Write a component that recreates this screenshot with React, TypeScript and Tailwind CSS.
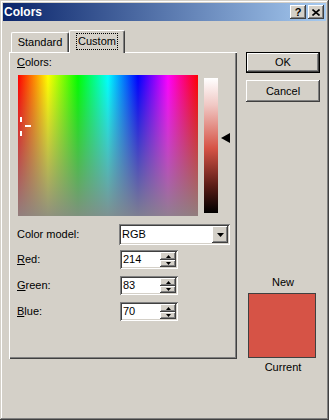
const raised =
  'bg-[#d4d0c8] shadow-[inset_-1px_-1px_#404040,inset_1px_1px_#ffffff,inset_-2px_-2px_#808080]';
const sunken =
  'bg-white shadow-[inset_1px_1px_#808080,inset_-1px_-1px_#ffffff,inset_2px_2px_#404040,inset_-2px_-2px_#d4d0c8]';

function Tri({ dir, size = 'sm' }: { dir: 'up' | 'down' | 'left'; size?: 'sm' | 'md' }) {
  if (dir === 'left') {
    return (
      <svg width="9" height="10" viewBox="0 0 9 10">
        <polygon points="0,5 9,0 9,10" fill="#000" />
      </svg>
    );
  }
  const w = size === 'md' ? 7 : 5;
  const h = size === 'md' ? 4 : 3;
  return (
    <svg width={w} height={h} viewBox={`0 0 ${w} ${h}`}>
      {dir === 'up' ? (
        <polygon points={`0,${h} ${w / 2},0 ${w},${h}`} fill="#000" />
      ) : (
        <polygon points={`0,0 ${w},0 ${w / 2},${h}`} fill="#000" />
      )}
    </svg>
  );
}

function SpinField({ value }: { value: string }) {
  return (
    <div className={`relative w-[58px] h-[19px] ${sunken} flex items-center`}>
      <span className="pl-[3px] text-[11px] leading-[13px]">{value}</span>
      <div className="absolute right-[2px] top-[2px] flex flex-col">
        <div className={`w-[16px] h-[8px] ${raised} flex items-center justify-center`}>
          <Tri dir="up" />
        </div>
        <div className={`w-[16px] h-[7px] ${raised} flex items-center justify-center`}>
          <Tri dir="down" />
        </div>
      </div>
    </div>
  );
}

function Row({ label, u, children }: { label: string; u: number; children: React.ReactNode }) {
  return (
    <div className="flex items-center">
      <div className="w-[103px] text-[11px] leading-[13px]">
        {label.slice(0, u)}
        <span className="underline">{label[u]}</span>
        {label.slice(u + 1)}
      </div>
      {children}
    </div>
  );
}

export default function App() {
  return (
    <div className="w-[329px] h-[420px] p-[3px] bg-[#d4d0c8] text-black font-['Liberation_Sans',Arial,sans-serif] shadow-[inset_-1px_-1px_#404040,inset_1px_1px_#d4d0c8,inset_-2px_-2px_#808080,inset_2px_2px_#ffffff] overflow-hidden">
      {/* title bar */}
      <div className="h-[18px] flex items-center justify-between pl-[1px] pr-[2px] bg-[linear-gradient(to_right,#0a246a,#a6caf0)]">
        <span className="text-white font-bold text-[12px] leading-[14px]">Colors</span>
        <div className="flex gap-[2px]">
          <div className={`w-[16px] h-[14px] ${raised} flex items-center justify-center text-[11px] font-bold leading-none`}>?</div>
          <div className={`w-[16px] h-[14px] ${raised} flex items-center justify-center`}>
            <svg width="8" height="7" viewBox="0 0 8 7">
              <path d="M0.5 0.5 L7.5 6.5 M7.5 0.5 L0.5 6.5" stroke="#000" strokeWidth="1.6" />
            </svg>
          </div>
        </div>
      </div>

      {/* body */}
      <div className="flex pl-[6px] pt-[9px] gap-[9px]">
        {/* tab control */}
        <div className="w-[228px] flex flex-col">
          <div className="h-[22px] flex items-end pl-[2px]">
            <div className="w-[58px] h-[20px] border-t border-l border-white border-r border-r-[#404040] rounded-t-[2px] shadow-[inset_-1px_0_#808080] flex items-center justify-center text-[11px] leading-[13px] pb-[1px]">
              Standard
            </div>
            <div className="relative z-10 -mb-[1px] w-[56px] h-[23px] bg-[#d4d0c8] border-t border-l border-white border-r border-r-[#404040] rounded-t-[2px] shadow-[inset_-1px_0_#808080] flex items-start justify-center pt-[2px]">
              <span className="px-[1px] py-[1px] border border-dotted border-black text-[11px] leading-[13px]">Custom</span>
            </div>
          </div>
          <div className="h-[307px] pl-[8px] pt-[4px] shadow-[inset_1px_1px_#ffffff,inset_-1px_-1px_#404040,inset_-2px_-2px_#808080]">
            <div className="text-[11px] leading-[13px]">
              <span className="underline">C</span>olors:
            </div>
            <div className="flex items-start mt-[6px] ml-[1px]">
              <div className="relative w-[180px] h-[141px] bg-[linear-gradient(to_bottom,rgba(136,136,136,0),rgba(136,136,136,0.92)),linear-gradient(to_right,#ff0000,#ffff00,#00ff00,#00ffff,#0000ff,#ff00ff,#ff0000)]">
                <div className="absolute left-[2px] top-[42px] w-[2px] h-[5px] bg-white" />
                <div className="absolute left-[7px] top-[50px] w-[6px] h-[2px] bg-white" />
                <div className="absolute left-[2px] top-[56px] w-[2px] h-[5px] bg-white" />
              </div>
              <div className="ml-[6px] mt-[3px] w-[14px] h-[135px] bg-[linear-gradient(to_bottom,#ffffff,#f0c8c4_20%,#d65346_52%,#5a1c16_80%,#000000)]" />
              <div className="ml-[3px] mt-[58px]">
                <Tri dir="left" />
              </div>
            </div>

            <div className="mt-[8px] flex flex-col gap-[7px]">
              <div className="flex items-center">
                <div className="w-[102px] text-[11px] leading-[13px]">Color model:</div>
                <div className={`relative w-[111px] h-[21px] ${sunken} flex items-center`}>
                  <span className="pl-[3px] text-[11px] leading-[13px]">RGB</span>
                  <div className={`absolute right-[2px] top-[2px] w-[16px] h-[17px] ${raised} flex items-center justify-center`}>
                    <Tri dir="down" size="md" />
                  </div>
                </div>
              </div>
              <div className="-mt-[2px]">
                <Row label="Red:" u={0}>
                  <SpinField value="214" />
                </Row>
              </div>
              <Row label="Green:" u={0}>
                <SpinField value="83" />
              </Row>
              <Row label="Blue:" u={0}>
                <SpinField value="70" />
              </Row>
            </div>
          </div>
        </div>

        {/* right column */}
        <div className="w-[74px] pt-[22px] flex flex-col">
          <div className="h-[21px] border border-black">
            <div className={`h-full ${raised} flex items-center justify-center text-[11px] leading-[13px]`}>OK</div>
          </div>
          <div className={`mt-[7px] h-[22px] ${raised} flex items-center justify-center text-[11px] leading-[13px]`}>Cancel</div>
          <div className="mt-[174px] text-center text-[11px] leading-[13px]">New</div>
          <div className="mt-[4px] ml-[2px] w-[68px] h-[65px] bg-[#d65346] border border-[#404040]" />
          <div className="mt-[3px] text-center text-[11px] leading-[13px]">Current</div>
        </div>
      </div>
    </div>
  );
}
